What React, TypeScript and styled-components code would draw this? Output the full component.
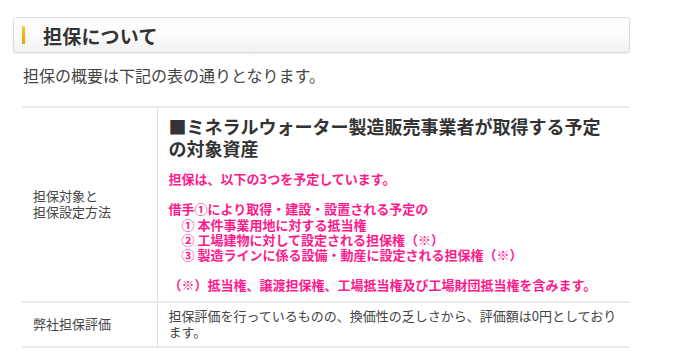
import React from "react";
import styled, { createGlobalStyle } from "styled-components";

const GlobalStyle = createGlobalStyle`
  html, body {
    margin: 0;
    padding: 0;
    background: #ffffff;
  }
  body {
    font-family: "Noto Sans CJK JP", "Noto Sans", sans-serif;
    color: #333333;
  }
`;

const Page = styled.div`
  width: 617px;
  padding: 17px 0 0 13px;
`;

const SectionHeading = styled.h2`
  box-sizing: border-box;
  height: 36px;
  margin: 0;
  padding: 0 0 0 8px;
  display: flex;
  align-items: center;
  border: 1px solid #dcdcdc;
  border-radius: 3px;
  background: linear-gradient(#ffffff 0%, #fbfbfb 50%, #f1f1f1 100%);
  box-shadow: 0 1px 2px rgba(0, 0, 0, 0.08);
  font-size: 19px;
  font-weight: 700;
  color: #333333;
  letter-spacing: 0.2px;
`;

const Accent = styled.span`
  width: 3px;
  height: 18px;
  margin-right: 18px;
  border-radius: 1px;
  background: linear-gradient(#ffc82a, #f39a00);
`;

const Body = styled.div`
  padding-left: 9px;
`;

const Intro = styled.p`
  margin: 10px 0 0;
  padding-left: 1px;
  font-size: 16px;
  line-height: 24px;
  color: #444444;
`;

const Table = styled.table`
  width: 608px;
  margin-top: 19px;
  border-collapse: collapse;
  table-layout: fixed;
`;

const Row = styled.tr`
  border-top: 2px solid #ebebeb;
  border-bottom: 2px solid #ebebeb;
`;

const LabelCell = styled.th`
  box-sizing: border-box;
  width: 135px;
  padding: 6px 11px;
  border-right: 1px solid #dedede;
  text-align: left;
  vertical-align: middle;
  font-size: 13px;
  line-height: 16px;
  font-weight: 400;
  color: #444444;
`;

const ValueCell = styled.td<{ $pad?: string }>`
  box-sizing: border-box;
  padding: ${(p) => p.$pad ?? "5px 11px 6px"};
  vertical-align: top;
  font-size: 13px;
  line-height: 16px;
  color: #444444;
`;

const AssetTitle = styled.h3`
  margin: 0 0 12px;
  font-size: 18px;
  line-height: 21.5px;
  font-weight: 700;
  color: #333333;
  white-space: nowrap;
`;

const Notice = styled.p`
  margin: 0;
  font-size: 13px;
  line-height: 15.2px;
  font-weight: 700;
  color: #ff1a8c;
  white-space: nowrap;
`;

const INDENT = "\u3000";

const App: React.FC = () => (
  <>
    <GlobalStyle />
    <Page>
      <SectionHeading>
        <Accent />
        担保について
      </SectionHeading>
      <Body>
        <Intro>担保の概要は下記の表の通りとなります。</Intro>
        <Table>
          <tbody>
            <Row>
              <LabelCell>
                担保対象と
                <br />
                担保設定方法
              </LabelCell>
              <ValueCell $pad="8px 11px 8px">
                <AssetTitle>
                  ■ミネラルウォーター製造販売事業者が取得する予定
                  <br />
                  の対象資産
                </AssetTitle>
                <Notice>
                  担保は、以下の3つを予定しています。
                  <br />
                  <br />
                  借手①により取得・建設・設置される予定の
                  <br />
                  {INDENT + "① 本件事業用地に対する抵当権"}
                  <br />
                  {INDENT + "② 工場建物に対して設定される担保権（※）"}
                  <br />
                  {INDENT + "③ 製造ラインに係る設備・動産に設定される担保権（※）"}
                  <br />
                  <br />
                  （※）抵当権、譲渡担保権、工場抵当権及び工場財団抵当権を含みます。
                </Notice>
              </ValueCell>
            </Row>
            <Row>
              <LabelCell>弊社担保評価</LabelCell>
              <ValueCell>
                担保評価を行っているものの、換価性の乏しさから、評価額は0円としており
                <br />
                ます。
              </ValueCell>
            </Row>
          </tbody>
        </Table>
      </Body>
    </Page>
  </>
);

export default App;
